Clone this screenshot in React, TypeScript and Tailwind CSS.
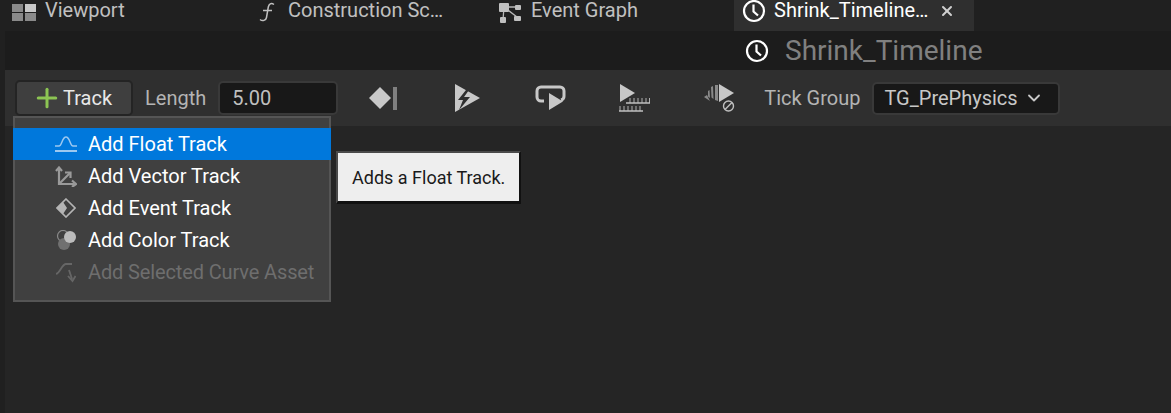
import { ChevronDown, Plus, X } from 'lucide-react';

const ClockIcon = ({ className }: { className: string }) => (
    <svg viewBox="0 0 24 24" className={className} fill="none" stroke="#fff" strokeWidth="2.2">
        <circle cx="12" cy="12" r="10" />
        <path d="M11.5 5.5v7l4.5 4" />
    </svg>
);

const ViewportIcon = () => (
    <svg width="24" height="17" viewBox="0 0 24 17">
        <rect x="0" y="0" width="11" height="8" fill="#8a8a8a" />
        <rect x="13" y="0" width="11" height="8" fill="#c8c8c8" />
        <rect x="0" y="9" width="11" height="8" fill="#8a8a8a" />
        <rect x="13" y="9" width="11" height="8" fill="#8a8a8a" />
    </svg>
);

const FunctionIcon = () => (
    <svg width="16" height="20" viewBox="0 0 16 20" fill="none" stroke="#c0c0c0" strokeWidth="1.5">
        <path d="M15 2.5C12 0.5 10 2 9.3 5L7.5 15.5C7 18.5 3.500 19.500 1 17.500" />
        <path d="M4 8.500h9" />
    </svg>
);

const GraphIcon = () => (
    <svg width="22" height="21" viewBox="0 0 22 21">
        <path d="M5 5L4 18M5 5l13 10M8 5h9" stroke="#b8b8b8" strokeWidth="1.300" fill="none" />
        <rect x="0" y="1" width="10" height="9" rx="1" fill="#c0c0c0" />
        <rect x="16" y="3" width="6" height="5" rx="1" fill="#c0c0c0" />
        <rect x="1" y="15" width="6" height="6" rx="1" fill="#c0c0c0" />
        <rect x="15" y="14" width="7" height="5" rx="1" fill="#c0c0c0" />
    </svg>
);

const KeyIcon = () => (
    <svg width="30" height="26" viewBox="0 0 30 26">
        <path d="M12 2l11 11-11 11L1 13z" fill="#c8c8c8" />
        <rect x="25" y="2" width="4" height="23" fill="#808080" />
    </svg>
);

const AutoplayIcon = () => (
    <svg width="26" height="28" viewBox="0 0 26 28">
        <path d="M1 0l25 14L1 28z" fill="#c8c8c8" />
        <path d="M12 6l-8 10h5l-4 10 11-13h-6l5-7z" fill="#2f2f2f" />
    </svg>
);

const LoopIcon = () => (
    <svg width="31" height="26" viewBox="0 0 31 26">
        <path d="M9 16H6a4 4 0 0 1-4-4V6a4 4 0 0 1 4-4h19a4 4 0 0 1 4 4v5a4 4 0 0 1-3 4" fill="none" stroke="#c8c8c8" strokeWidth="3" />
        <path d="M14 8l14 8.500L14 25z" fill="#c8c8c8" />
    </svg>
);

const RulerIcon = () => (
    <svg width="31" height="28" viewBox="0 0 31 28">
        <path d="M1 0l15 9-15 9z" fill="#c8c8c8" />
        <path d="M11 19v-5M15 19v-5M19 19v-5M23 19v-5M27 19v-5M30.500 19v-5" stroke="#b0b0b0" strokeWidth="1" fill="none" />
        <path d="M1 27v-5M5 27v-5M9 27v-5M13 27v-5M17 27v-5M21 27v-5" stroke="#b0b0b0" strokeWidth="1" fill="none" />
        <path d="M0 27h24M7 19h24" stroke="#c0c0c0" strokeWidth="1.500" fill="none" />
    </svg>
);

const TickIcon = () => (
    <svg width="31" height="28" viewBox="0 0 31 28">
        <path d="M15 0l15 9-15 9z" fill="#c8c8c8" />
        <path d="M11 1h3v16l-3-1zM7 3l2-1 .5 13-2-1.500zM4 7l1.500-1 .5 8-2-1.500zM0 13l3-2 3 6z" fill="#8a8a8a" />
        <circle cx="24.500" cy="22" r="5" fill="none" stroke="#c0c0c0" strokeWidth="1.400" />
        <path d="M21 25.500l7-7" stroke="#c0c0c0" strokeWidth="1.400" />
    </svg>
);

const FloatIcon = () => (
    <svg width="22" height="18" viewBox="0 0 22 18" fill="none" stroke="#9cc8f0" strokeWidth="1.500">
        <path d="M0 11h4c3 0 3-9 7-9s4 9 7 9h4" />
        <path d="M0 16h22" strokeWidth="2" />
    </svg>
);

const VectorIcon = () => (
    <svg width="22" height="21" viewBox="0 0 22 21" fill="none" stroke="#9a9a9a" strokeWidth="2.200">
        <path d="M4 2v16h15" />
        <path d="M1 5l3-3.500L7 5M17 14.500l4 3.500-4 3" />
        <path d="M5 17L15 7" />
        <path d="M10 6.500h5.500V12" />
    </svg>
);

const EventIcon = () => (
    <svg width="20" height="20" viewBox="0 0 20 20">
        <path d="M10 1l9 9-9 9-9-9z" fill="none" stroke="#b4b4b4" strokeWidth="1.600" />
        <path d="M10 1L1 10l6 6 4-6-4-6z" fill="#b4b4b4" />
    </svg>
);

const ColorIcon = () => (
    <svg width="20" height="21" viewBox="0 0 20 21">
        <circle cx="7" cy="6" r="5.500" fill="none" stroke="#8a8a8a" strokeWidth="1.200" />
        <circle cx="8" cy="14" r="6" fill="#707070" />
        <circle cx="14" cy="7" r="6" fill="#bcbcbc" />
    </svg>
);

const CurveIcon = () => (
    <svg width="20" height="21" viewBox="0 0 20 21" fill="none" stroke="#666" strokeWidth="1.800">
        <path d="M0 12c4-1 6-10 10-10h6" />
        <path d="M13 8l3 9" />
        <path d="M12 14l4.500 5 3-5" />
    </svg>
);

const tabs = [
    { label: 'Viewport', icon: <ViewportIcon />, width: 'w-[247px]', pad: 'pl-[12px]', gap: 'gap-[9px]' },
    { label: 'Construction Sc…', icon: <FunctionIcon />, width: 'w-[240px]', pad: 'pl-[12px]', gap: 'gap-[13px]' },
    { label: 'Event Graph', icon: <GraphIcon />, width: 'w-[247px]', pad: 'pl-[12px]', gap: 'gap-[10px]' },
];

const menuItems = [
    { label: 'Add Float Track', icon: <FloatIcon />, active: true },
    { label: 'Add Vector Track', icon: <VectorIcon /> },
    { label: 'Add Event Track', icon: <EventIcon /> },
    { label: 'Add Color Track', icon: <ColorIcon /> },
    { label: 'Add Selected Curve Asset', icon: <CurveIcon />, disabled: true },
];

const App = () => {
    return (
        <div className="relative h-[413px] w-[1171px] overflow-hidden bg-[#202020] font-['Roboto',sans-serif] text-[20px]">
            <div className="flex h-[31px] text-[#c0c0c0]">
                {tabs.map((tab) => (
                    <div key={tab.label} className={`flex h-[24px] items-center ${tab.width} ${tab.pad} ${tab.gap}`}>
                        {tab.icon}
                        <span className="-mt-[4px] whitespace-nowrap leading-[20px]">{tab.label}</span>
                    </div>
                ))}
                <div className="flex h-full w-[240px] bg-[#2f2f2f] pl-[8px] text-white">
                    <div className="flex h-[22px] items-center">
                        <ClockIcon className="h-[24px] w-[24px]" />
                        <span className="-mt-[2px] ml-[8px] whitespace-nowrap leading-[20px]">Shrink_Timeline…</span>
                        <X className="ml-[11px] h-[16px] w-[16px] text-[#d0d0d0]" strokeWidth={3} />
                    </div>
                </div>
            </div>
            <div className="ml-[5px] h-[382px] bg-[#252525]">
                <div className="flex h-[39px] items-center bg-[#1c1c1c] pl-[740px]">
                    <ClockIcon className="h-[24px] w-[24px]" />
                    <span className="ml-[16px] text-[28px] text-[#808080]">Shrink_Timeline</span>
                </div>
                <div className="flex h-[56px] items-center bg-[#2f2f2f] pl-[10px] text-[#b4b4b4]">
                    <button className="flex h-[36px] w-[118px] items-center rounded-[5px] border-2 border-[#242424] bg-[#3f3f3f] pl-[15px] text-[#e8e8e8]">
                        <Plus className="h-[30px] w-[30px] text-[#8cc453]" strokeWidth={2.400} />
                        <span className="ml-[1px]">Track</span>
                    </button>
                    <span className="ml-[12px]">Length</span>
                    <div className="ml-[12px] flex h-[34px] w-[120px] items-center rounded-[5px] border-2 border-[#393939] bg-[#181818] pl-[12px] text-[#c0c0c0]">
                        5.00
                    </div>
                    <div className="ml-[30px]"><KeyIcon /></div>
                    <div className="ml-[56px]"><AutoplayIcon /></div>
                    <div className="ml-[55px]"><LoopIcon /></div>
                    <div className="ml-[53px]"><RulerIcon /></div>
                    <div className="ml-[54px]"><TickIcon /></div>
                    <span className="ml-[29px]">Tick Group</span>
                    <div className="ml-[12px] flex h-[33px] w-[188px] items-center rounded-[5px] border-2 border-[#393939] bg-[#181818] pl-[10px] text-[#c8c8c8]">
                        TG_PrePhysics
                        <ChevronDown className="ml-[6px] h-[20px] w-[20px]" strokeWidth={2.200} />
                    </div>
                </div>
            </div>

            <div className="absolute left-[13px] top-[116px] h-[186px] w-[318px] border-2 border-[#555555] bg-[#404040] pt-[10px]">
                {menuItems.map((item) => (
                    <div
                        key={item.label}
                        className={`-mx-[2px] flex h-[32px] items-center ${item.active ? 'bg-[#0078dc]' : ''} ${item.disabled ? 'tracking-[-0.13px] text-[#6e6e6e]' : 'text-white'}`}
                    >
                        <div className="flex w-[75px] justify-end pr-[11px]"><div className="flex w-[22px] justify-center">{item.icon}</div></div>
                        <span className="whitespace-nowrap">{item.label}</span>
                    </div>
                ))}
            </div>

            <div className="absolute left-[336px] top-[151px] flex h-[53px] w-[185px] items-center border-2 border-b-[3px] border-[#4a4a4a] border-r-[#111111] border-b-[#111111] bg-[#eeeeee] pl-[14px] pt-[1px] text-[18px] text-[#1a1a1a]">
                Adds a Float Track.
            </div>
        </div>
    );
};

export default App;
